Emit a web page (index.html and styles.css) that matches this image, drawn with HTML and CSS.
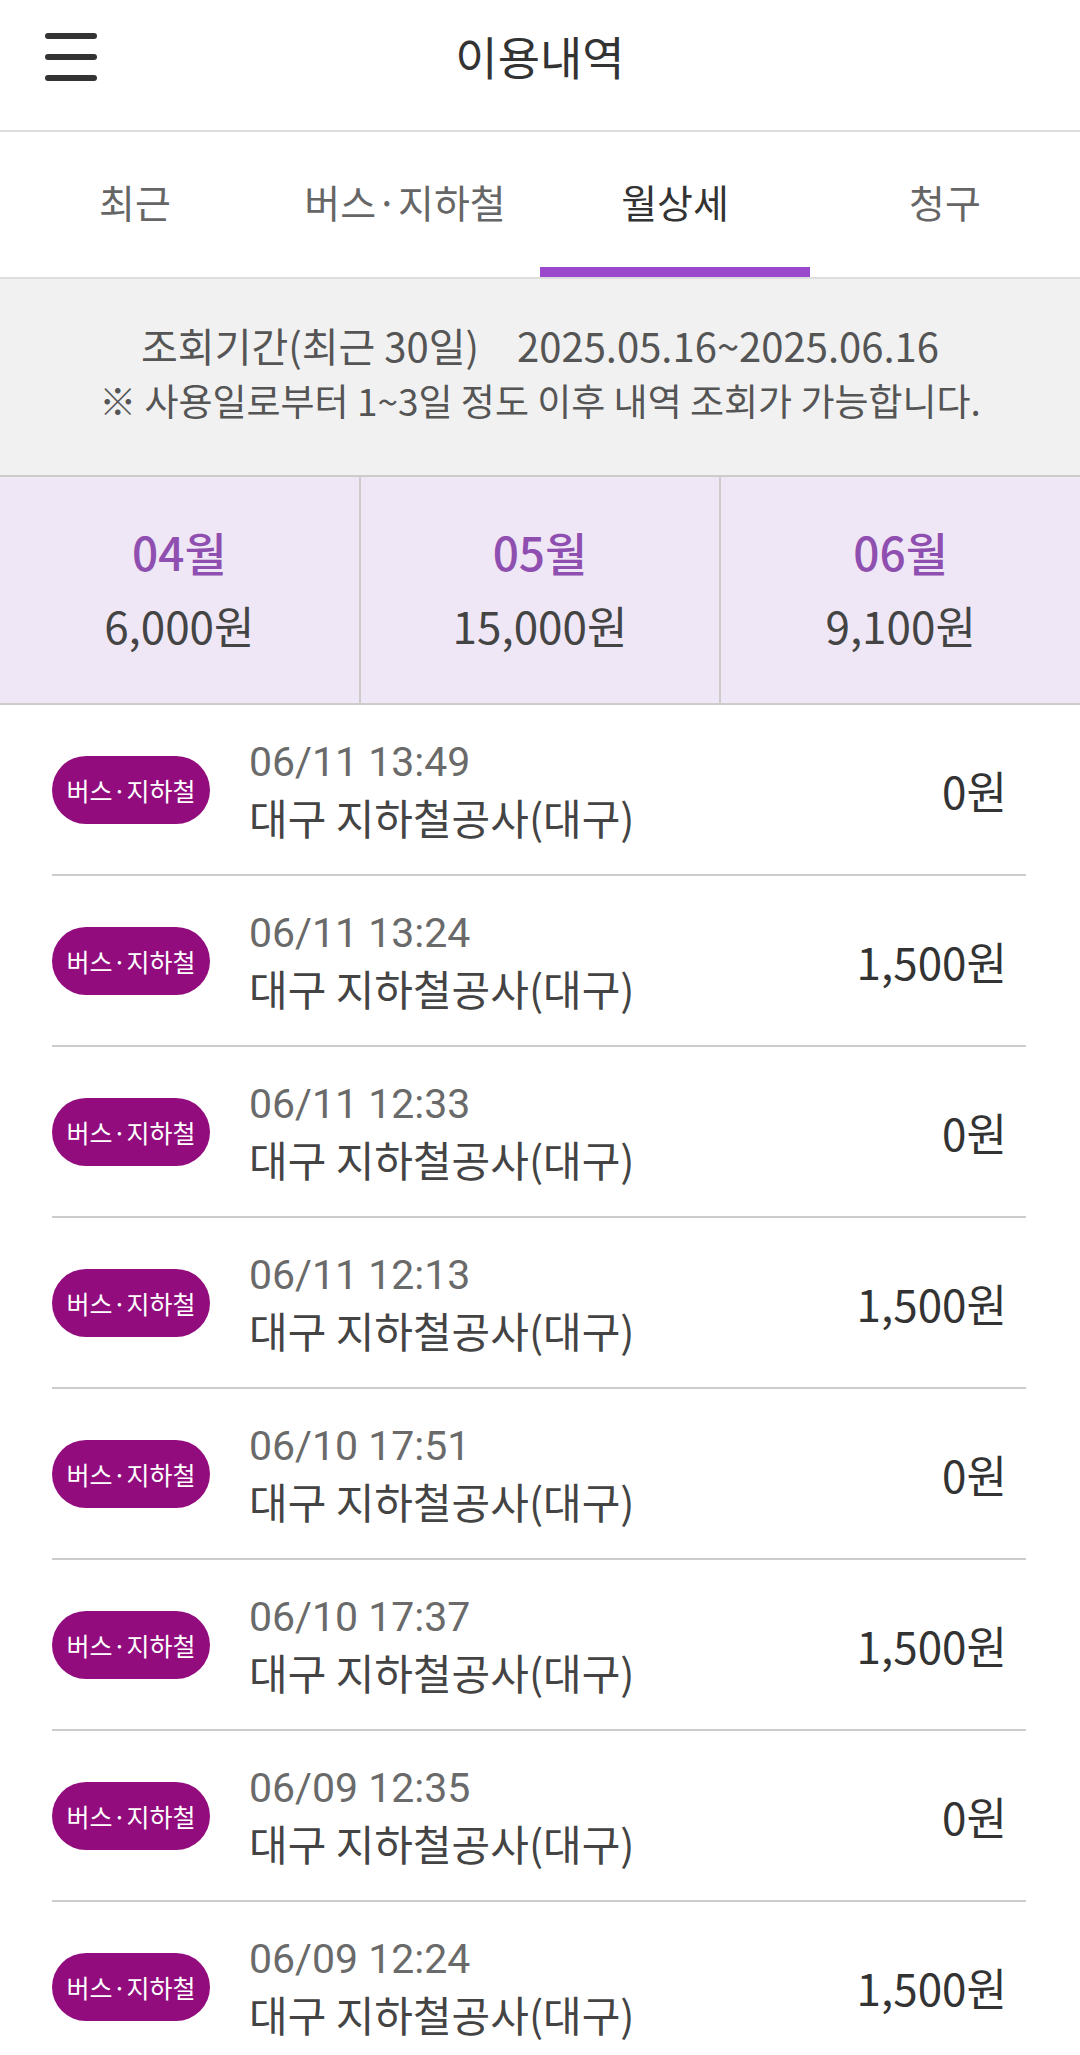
FILE: index.html
```html
<html>

<head>
  <meta charset="utf-8">
  <link rel="stylesheet" href="styles.css">
</head>

<body>
  <div class="header">
    <div class="menu-btn">
      <span></span>
      <span></span>
      <span></span>
    </div>
    <h1 class="title">이용내역</h1>
  </div>

  <div class="tabs">
    <div class="tab">최근</div>
    <div class="tab">버스·지하철</div>
    <div class="tab active">월상세</div>
    <div class="tab">청구</div>
  </div>

  <div class="period">
    <p class="period-range">조회기간(최근 30일)<span class="gap"></span>2025.05.16~2025.06.16</p>
    <p class="period-note">※ 사용일로부터 1~3일 정도 이후 내역 조회가 가능합니다.</p>
  </div>

  <div class="months">
    <div class="month">
      <div class="month-name">04월</div>
      <div class="month-sum">6,000원</div>
    </div>
    <div class="month">
      <div class="month-name">05월</div>
      <div class="month-sum">15,000원</div>
    </div>
    <div class="month">
      <div class="month-name">06월</div>
      <div class="month-sum">9,100원</div>
    </div>
  </div>

  <div class="list" id="list"></div>

  <script>
    var rows = [
      ["06/11 13:49", "0원"],
      ["06/11 13:24", "1,500원"],
      ["06/11 12:33", "0원"],
      ["06/11 12:13", "1,500원"],
      ["06/10 17:51", "0원"],
      ["06/10 17:37", "1,500원"],
      ["06/09 12:35", "0원"],
      ["06/09 12:24", "1,500원"]
    ];

    var list = document.getElementById("list");
    rows.forEach(function (r) {
      var row = document.createElement("div");
      row.className = "row";
      row.innerHTML =
        '<span class="badge">버스·지하철</span>' +
        '<div class="info">' +
        '<div class="when">' + r[0] + '</div>' +
        '<div class="where">대구 지하철공사(대구)</div>' +
        '</div>' +
        '<div class="amount">' + r[1] + '</div>';
      list.appendChild(row);
    });
  </script>
</body>

</html>
```

FILE: styles.css
```css
body {
  margin: 0;
  padding: 0;
  background-color: #ffffff;
  font-family: "Noto Sans CJK KR", "Noto Sans", sans-serif;
  color: #444444;
  overflow: hidden;
}

p {
  margin: 0;
}

.header {
  height: 130px;
  display: flex;
  align-items: center;
  justify-content: center;
  border-bottom: 2px solid #dddddd;
  position: relative;
}

.menu-btn {
  position: absolute;
  left: 45px;
  top: 33px;
  width: 52px;
  display: flex;
  flex-direction: column;
  gap: 15px;
}

.menu-btn span {
  display: block;
  height: 6px;
  border-radius: 3px;
  background-color: #333333;
}

.title {
  margin: 0;
  margin-top: -20px;
  font-size: 46px;
  font-weight: 400;
  color: #333333;
}

.tabs {
  display: flex;
  height: 145px;
  border-bottom: 2px solid #dddddd;
}

.tab {
  flex: 1;
  display: flex;
  align-items: center;
  justify-content: center;
  padding-top: 2px;
  font-size: 39px;
  color: #666666;
  border-bottom: 10px solid transparent;
}

.tab.active {
  color: #333333;
  border-bottom-color: #9a48cc;
}

.period {
  height: 198px;
  box-sizing: border-box;
  background-color: #f1f1f1;
  border-bottom: 2px solid #cccccc;
  display: flex;
  flex-direction: column;
  align-items: center;
  justify-content: center;
  gap: 0;
  padding-bottom: 10px;
  color: #555555;
}

.period-range {
  font-size: 40px;
  line-height: 56px;
}

.period-range .gap {
  display: inline-block;
  width: 38px;
}

.period-note {
  font-size: 37px;
  line-height: 54px;
}

.months {
  display: flex;
  height: 228px;
  box-sizing: border-box;
  background-color: #efe7f5;
  border-bottom: 2px solid #cccccc;
}

.month {
  flex: 1;
  display: flex;
  flex-direction: column;
  align-items: center;
  justify-content: center;
  gap: 10px;
  border-left: 2px solid #cccccc;
}

.month:first-child {
  border-left: none;
}

.month-name {
  font-size: 46px;
  line-height: 64px;
  font-weight: 500;
  color: #8f4fb0;
  margin-top: -4px;
}

.month-sum {
  font-size: 44px;
  line-height: 64px;
  color: #444444;
}

.list {
  padding: 0 54px 0 52px;
}

.row {
  height: 169px;
  display: flex;
  align-items: center;
  border-bottom: 2px solid #cccccc;
}

.badge {
  width: 158px;
  height: 68px;
  border-radius: 34px;
  background-color: #920c7e;
  color: #ffffff;
  font-size: 25px;
  display: flex;
  align-items: center;
  justify-content: center;
  flex-shrink: 0;
}

.info {
  flex: 1;
  margin-left: 39px;
  margin-top: -2px;
  display: flex;
  flex-direction: column;
}

.when {
  font-family: Roboto, "Noto Sans CJK KR", sans-serif;
  font-size: 41px;
  line-height: 56px;
  font-weight: 400;
  color: #6a6a6a;
}

.where {
  font-size: 42px;
  line-height: 54px;
  color: #444444;
}

.amount {
  padding-right: 19px;
  font-size: 44px;
  font-weight: 400;
  color: #333333;
}
```
